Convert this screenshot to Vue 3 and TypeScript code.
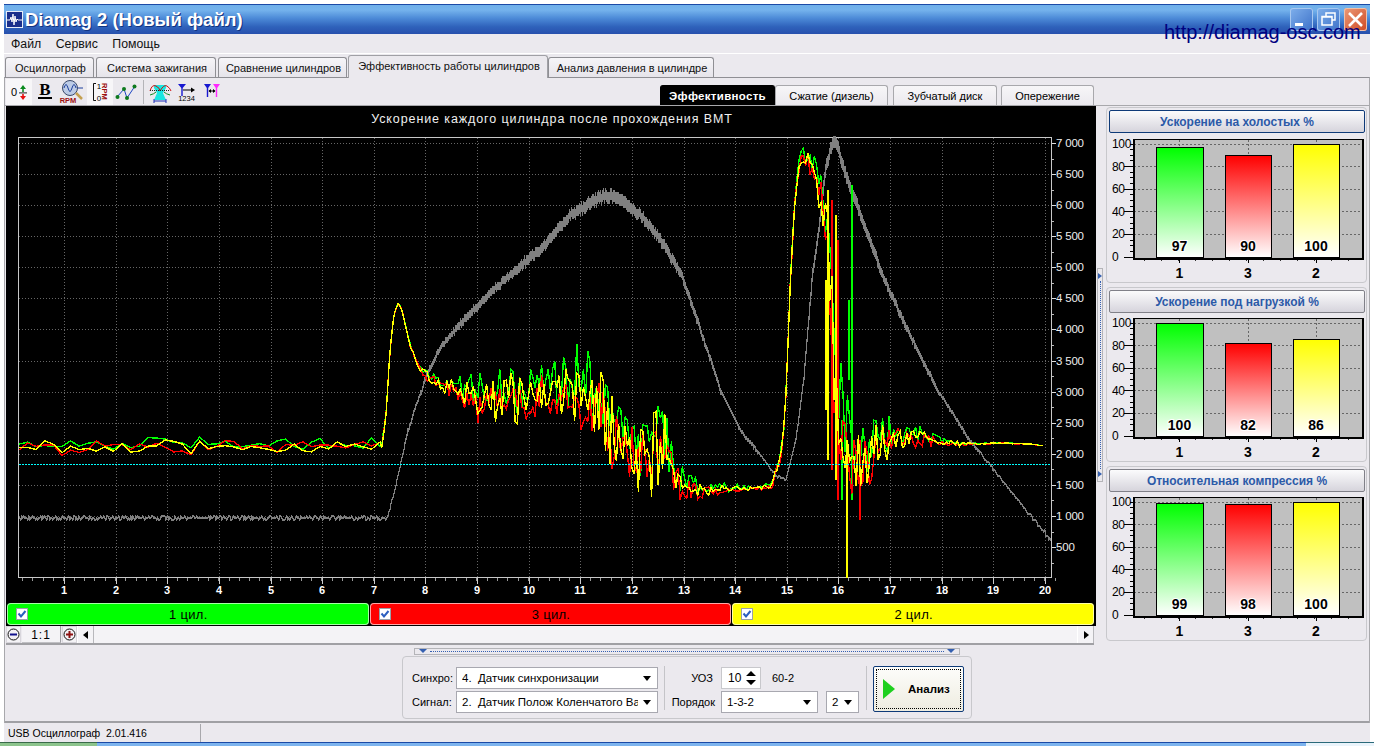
<script setup lang="ts">
type Key = [number, number, number];

const keys: Key[] = [
  [19, 447, 9], [379, 447, 9], [382, 445, 4], [386, 415, 1], [390, 350, 1], [394, 315, 1], [398, 303, 1], [402, 310, 1],
  [410, 345, 1.5], [418, 365, 3], [425, 375, 6], [440, 385, 9], [460, 392, 15], [480, 398, 25], [500, 400, 27], [520, 398, 29],
  [540, 393, 31], [560, 392, 33], [580, 392, 40], [600, 400, 44], [610, 430, 46], [630, 450, 50], [650, 455, 52], [665, 448, 48],
  [673, 470, 28], [685, 490, 17], [700, 490, 10], [720, 490, 6], [745, 488, 3], [772, 487, 3], [775, 470, 8], [780, 460, 8],
  [785, 420, 7], [790, 290, 4], [795, 200, 6], [800, 160, 11], [806, 158, 16], [815, 165, 22], [820, 190, 28], [828, 240, 38],
  [832, 330, 80], [835, 420, 70], [845, 448, 55], [860, 452, 44], [880, 445, 28], [890, 438, 22], [900, 435, 14], [920, 438, 11],
  [940, 441, 4.5], [960, 444, 3], [975, 444, 1.2], [1000, 443, 0.6], [1030, 444, 0.4], [1045, 446, 0.3],
];

const grayKeys: [number, number][] = [
  [19, 518], [385, 518], [388, 513], [394, 490], [400, 463], [406, 435], [413, 413], [427, 373], [443, 343], [470, 313],
  [493, 290], [520, 265], [540, 250], [570, 215], [600, 197], [615, 196], [640, 215], [660, 240], [680, 272], [700, 330],
  [720, 390], [740, 430], [760, 455], [775, 476], [785, 480], [795, 440], [803, 380], [807, 330], [812, 273], [818, 230],
  [825, 170], [832, 143], [836, 143], [847, 180], [857, 207], [870, 243], [887, 287], [907, 330], [937, 390], [967, 437],
  [993, 470], [1023, 507], [1050, 540],
];

function rng(seed: number): () => number {
  let s = seed >>> 0;
  return () => {
    s = (s + 0x6d2b79f5) >>> 0;
    let t = s;
    t = Math.imul(t ^ (t >>> 15), t | 1);
    t ^= t + Math.imul(t ^ (t >>> 7), t | 61);
    return ((t ^ (t >>> 14)) >>> 0) / 4294967296;
  };
}

function base(x: number): [number, number] {
  for (let i = 1; i < keys.length; i++) {
    if (x <= keys[i][0]) {
      const a = keys[i - 1];
      const b = keys[i];
      const f = (x - a[0]) / (b[0] - a[0]);
      return [a[1] + (b[1] - a[1]) * f, a[2] + (b[2] - a[2]) * f];
    }
  }
  const l = keys[keys.length - 1];
  return [l[1], l[2]];
}

function series(seed: number, bias: number, own: number): string {
  const r = rng(seed);
  const shared = rng(77);
  let d = "";
  let x = 19;
  while (x <= 1045) {
    const [y, amp] = base(x);
    const n = (shared() * 2 - 1) * 0.3 + (r() * 2 - 1) * own + bias;
    const py = Math.max(140, y + n * amp);
    d += `${d ? "L" : "M"}${x.toFixed(1)} ${py.toFixed(1)}`;
    x += x < 379 ? 8.6 : x < 415 ? 1.5 : 2.2;
  }
  return d;
}

function grayPath(): string {
  const r = rng(5);
  let d = "";
  let prev = 518;
  for (let x = 19; x <= 1050; x++) {
    let c = 518;
    for (let i = 1; i < grayKeys.length; i++) {
      if (x <= grayKeys[i][0]) {
        const a = grayKeys[i - 1];
        const b = grayKeys[i];
        c = a[1] + ((b[1] - a[1]) * (x - a[0])) / (b[0] - a[0]);
        break;
      }
    }
    const h = Math.min(6, Math.max(0.6, (540 - c) / 60));
    const n = (r() - 0.5) * (c > 510 ? 4 : 1 + h * 0.6);
    const y = Math.round((c + n) / 2) * 2;
    const top = Math.min(prev, y - h);
    const bot = Math.max(prev, y + h);
    d += `M${x + 0.5} ${top.toFixed(1)}V${bot.toFixed(1)}`;
    prev = y;
  }
  return d;
}

const green = series(11, -0.3, 0.72) + "M852 185V500M849 380V300M842 500V420";
const red = series(22, 0.2, 0.7) + "M832 200V470M838 240V500M860 520V440";
const yellow = series(33, 0, 0.7) + "M828 190V460M836 215V480M847 440V578M826 280V410";
const gray = grayPath();

const yTicks = ["7 000", "6 500", "6 000", "5 500", "5 000", "4 500", "4 000", "3 500", "3 000", "2 500", "2 000", "1 500", "1 000", "500"]
  .map((label, i) => ({ label, y: Math.round(143 + i * 31.08) }));
const xTicks = Array.from({ length: 20 }, (_, i) => ({ label: String(i + 1), x: Math.round(64 + i * 51.63) }));
const minorY = Array.from({ length: 28 }, (_, i) => Math.round(143 + i * 15.54));
const minorX = Array.from({ length: 101 }, (_, i) => Math.round(22 + i * 10.326));

const topTabs = [
  { t: "Осциллограф", w: 89 }, { t: "Система зажигания", w: 120 }, { t: "Сравнение цилиндров", w: 129 },
  { t: "Эффективность работы цилиндров", w: 200, active: true }, { t: "Анализ давления в цилиндре", w: 166 },
];
const subTabs = [
  { t: "Эффективность", w: 115, active: true, ml: 0 }, { t: "Сжатие (дизель)", w: 113, ml: 0 },
  { t: "Зубчатый диск", w: 104, ml: 5 }, { t: "Опережение", w: 93, ml: 4 },
];
const legend = [
  { t: "1 цил.", c: "green" }, { t: "3 цил.", c: "red" }, { t: "2 цил.", c: "yellow" },
];

const barX = [50, 119, 187];
const barW = [47, 46, 46];
const barLabels = ["1", "3", "2"];
const barColors = ["#00ff00", "#ff0000", "#ffff00"];
const yVals = [100, 80, 60, 40, 20, 0];
const panels = [
  { title: "Ускорение на холостых %", v: [97, 90, 100], focus: true },
  { title: "Ускорение под нагрузкой %", v: [100, 82, 86], focus: false },
  { title: "Относительная компрессия %", v: [99, 98, 100], focus: false },
];
const barMinorX = Array.from({ length: 13 }, (_, i) => 38 + i * 17);
const barMinorY = Array.from({ length: 21 }, (_, i) => 10 + i * 5.65);
function vy(p: number): number { return 123 - p * 1.13; }
</script>

<template>
  <div class="window">
    <header class="titlebar">
      <svg class="appicon" width="17" height="17" viewBox="0 0 17 17">
        <rect x="0.5" y="0.5" width="16" height="16" fill="#1a2f8c" stroke="#e8eef8" />
        <path d="M1 9H4L5 6L6 11L7 3L8 14L9 5L10 11L11 8L12 9H16" fill="none" stroke="#fff" stroke-width="1" />
      </svg>
      <span class="apptitle">Diamag 2 (Новый файл)</span>
      <div class="winbtns">
        <span class="wb blue"><svg width="23" height="23" viewBox="0 0 23 23"><rect x="5" y="15" width="8" height="3" fill="#fff" /></svg></span>
        <span class="wb blue"><svg width="23" height="23" viewBox="0 0 23 23"><path d="M9 8V5H18V12H15M5 8.5H15V17H5ZM5 9H15" fill="none" stroke="#fff" stroke-width="1.5" /></svg></span>
        <span class="wb closebtn"><svg width="23" height="23" viewBox="0 0 23 23"><path d="M5 5L18 18M18 5L5 18" stroke="#fff" stroke-width="2.6" /></svg></span>
      </div>
      <span class="url">http://diamag-osc.com</span>
    </header>

    <nav class="menubar"><span>Файл</span><span>Сервис</span><span>Помощь</span></nav>

    <div class="tabstrip">
      <div v-for="tab in topTabs" :key="tab.t" class="toptab" :class="{ active: tab.active }" :style="{ width: tab.w + 'px' }">{{ tab.t }}</div>
    </div>

    <div class="frame">
      <div class="toolrow">
        <div class="tools">
          <span class="tool pressed">
            <svg width="24" height="24" viewBox="0 0 24 24">
              <text x="4" y="16" class="ic0">0</text>
              <path d="M16 5L13 9H15.2V12H16.8V9H19Z" fill="#0a8a1e" />
              <rect x="12" y="12.4" width="8" height="1" fill="#222" />
              <path d="M16 20L13 16H15.2V14H16.8V16H19Z" fill="#e81010" />
            </svg>
          </span>
          <span class="tool">
            <svg width="24" height="24" viewBox="0 0 24 24">
              <text x="12" y="15" text-anchor="middle" class="icb">B</text>
              <rect x="5" y="17" width="14" height="2" fill="#000" />
            </svg>
          </span>
          <span class="tool">
            <svg width="26" height="26" viewBox="0 0 26 26">
              <circle cx="12" cy="9" r="7.5" fill="#bccbe6" stroke="#3a4a6a" />
              <path d="M6 9Q8 2 10 9T14 9T18 9M19.5 9H25" fill="none" stroke="#1c3f9c" />
              <path d="M18 14L24 20" stroke="#c4a050" stroke-width="2.5" />
              <text x="10" y="24" text-anchor="middle" class="icr">RPM</text>
            </svg>
          </span>
          <span class="gap3"></span>
          <span class="tool pressed">
            <svg width="24" height="24" viewBox="0 0 24 24">
              <path d="M8 3.5H5.5V20.5H8" fill="none" stroke="#111" />
              <text x="11" y="9" text-anchor="middle" class="ics">1</text>
              <text x="11" y="21" text-anchor="middle" class="ics">0</text>
              <text x="0" y="0" transform="translate(14 3) rotate(90)" class="icr2">RPM</text>
            </svg>
          </span>
          <span class="tool">
            <svg width="24" height="24" viewBox="0 0 24 24">
              <path d="M3 17L10 9L13 18L21 6" fill="none" stroke="#1c45c4" stroke-width="1" />
              <circle cx="3.5" cy="17" r="2" fill="#0d7a1e" /><circle cx="10" cy="9" r="2" fill="#0d7a1e" />
              <circle cx="13" cy="18" r="2" fill="#0d7a1e" /><circle cx="20.5" cy="6.5" r="2" fill="#0d7a1e" />
            </svg>
          </span>
          <span class="sep"></span>
          <span class="tool">
            <svg width="24" height="24" viewBox="0 0 24 24">
              <path d="M6 5H18V8L15 13L18 20H6L9 13L6 8Z" fill="#19e6e0" />
              <path d="M2 11Q4 4 8 6T12 11Q16 4 19 6T23 11" fill="none" stroke="#d01010" />
              <path d="M2 10.5H22" stroke="#222" stroke-dasharray="1 1" />
              <path d="M2 15Q6 14 8 12M16 12Q18 14 22 15" fill="none" stroke="#0f8a20" />
              <path d="M6 21H18M6 19V23M18 19V23" stroke="#1c2fb8" />
            </svg>
          </span>
          <span class="tool">
            <svg width="26" height="24" viewBox="0 0 26 24">
              <path d="M5 4H13L9.7 8V16H8.3V8Z" fill="#1818d0" />
              <path d="M10 10H20" stroke="#000" /><path d="M18 7.5L22 10L18 12.5Z" fill="#000" />
              <text x="13.5" y="21" text-anchor="middle" class="icn">1234</text>
            </svg>
          </span>
          <span class="tool">
            <svg width="26" height="24" viewBox="0 0 26 24">
              <path d="M5 4H12L9.2 8V17H7.8V8Z" fill="#1818d0" />
              <path d="M14 4H21L18.2 8V17H16.8V8Z" fill="#ff28ff" />
              <path d="M10 11H16" stroke="#000" /><path d="M12 9L9.5 11L12 13ZM14 9L16.5 11L14 13Z" fill="#000" />
            </svg>
          </span>
        </div>
        <div class="subtabs">
          <div v-for="s in subTabs" :key="s.t" class="subtab" :class="{ active: s.active }" :style="{ width: s.w + 'px', marginLeft: s.ml + 'px' }">{{ s.t }}</div>
        </div>
      </div>

      <div class="main">
        <div class="leftcol">
          <div class="scope">
            <svg class="chart" width="1090" height="497" viewBox="6 106 1090 497">
              <rect x="6" y="106" width="1090" height="497" fill="#000" />
              <text x="552" y="123" text-anchor="middle" class="ctitle">Ускорение каждого цилиндра после прохождения ВМТ</text>
              <g shape-rendering="crispEdges">
                <line v-for="t in yTicks" :key="'g' + t.y" x1="19" x2="1051" :y1="t.y" :y2="t.y" class="grid" />
                <line v-for="t in xTicks" :key="'v' + t.x" y1="138" y2="577" :x1="t.x" :x2="t.x" class="grid" />
                <path d="M18.5 137.5H1051.5V577.5H18.5Z" fill="none" stroke="#c8c8c8" />
                <line v-for="y in minorY" :key="'my' + y" x1="1052" x2="1054" :y1="y + 0.5" :y2="y + 0.5" stroke="#bbb" />
                <line v-for="t in yTicks" :key="'ty' + t.y" x1="1052" x2="1056" :y1="t.y + 0.5" :y2="t.y + 0.5" stroke="#ddd" />
                <line v-for="x in minorX" :key="'mx' + x" y1="578" y2="581" :x1="x + 0.5" :x2="x + 0.5" stroke="#999" />
                <line v-for="t in xTicks" :key="'tx' + t.x" y1="578" y2="584" :x1="t.x + 0.5" :x2="t.x + 0.5" stroke="#ccc" />
                <path :d="gray" fill="none" stroke="#808080" />
              </g>
              <g fill="none" shape-rendering="crispEdges" stroke-width="1.4">
                <path :d="green" stroke="#00ff00" />
                <path :d="red" stroke="#ff0000" />
                <path :d="yellow" stroke="#ffff00" />
              </g>
              <line x1="19" x2="1051" y1="464.5" y2="464.5" stroke="#00ffff" stroke-dasharray="2 1" shape-rendering="crispEdges" />
              <text v-for="t in yTicks" :key="'l' + t.y" x="1056" :y="t.y + 4" class="ylab">{{ t.label }}</text>
              <text v-for="t in xTicks" :key="'xl' + t.x" :x="t.x" y="594" text-anchor="middle" class="xlab">{{ t.label }}</text>
            </svg>
            <div class="legend">
              <div v-for="l in legend" :key="l.t" class="legitem" :class="l.c">
                <span class="check"><svg width="10" height="10" viewBox="0 0 10 10"><path d="M1.5 4.5L4 7.5L8.5 2" fill="none" stroke="#2c5fc0" stroke-width="2" /></svg></span>
                <span class="legtext">{{ l.t }}</span>
              </div>
            </div>
          </div>
          <div class="scrollrow">
            <span class="zoombtn"><svg width="13" height="13" viewBox="0 0 13 13"><circle cx="6.5" cy="6.5" r="5.5" fill="#f2f0f4" stroke="#111" /><rect x="3" y="5.5" width="7" height="2" fill="#10108c" /></svg></span>
            <span class="ratio">1:1</span>
            <span class="zoombtn"><svg width="13" height="13" viewBox="0 0 13 13"><circle cx="6.5" cy="6.5" r="5.5" fill="#f2f0f4" stroke="#111" /><path d="M3 6.5H10M6.5 3V10" stroke="#8c1010" stroke-width="2" /></svg></span>
            <span class="arrowbtn"><svg width="6" height="8" viewBox="0 0 6 8"><path d="M5 0V8L0 4Z" fill="#000" /></svg></span>
            <span class="track"></span>
            <span class="arrowbtn"><svg width="6" height="8" viewBox="0 0 6 8"><path d="M1 0V8L6 4Z" fill="#000" /></svg></span>
          </div>
        </div>

        <div class="gutter">
          <div class="vgrip">
            <svg width="5" height="6" viewBox="0 0 5 6"><path d="M0 0V6L4 3Z" fill="#3560b0" /></svg>
            <span class="vdots"></span>
            <svg width="5" height="6" viewBox="0 0 5 6"><path d="M0 0V6L4 3Z" fill="#3560b0" /></svg>
          </div>
        </div>

        <div class="rightcol">
          <section v-for="(p, pi) in panels" :key="p.title" class="panel" :class="{ first: pi === 0 }">
            <div class="ptitle" :class="{ focus: p.focus }">{{ p.title }}</div>
            <svg class="barsvg" width="259" height="147" viewBox="0 0 259 147">
              <defs>
                <linearGradient v-for="(c, i) in barColors" :id="`g${pi}${i}`" :key="c" x1="0" y1="0" x2="0" y2="1">
                  <stop offset="0" :stop-color="c" />
                  <stop offset="1" stop-color="#fff" />
                </linearGradient>
              </defs>
              <g transform="translate(-3 0)">
                <rect x="27.5" y="5.5" width="230" height="119" fill="#c0c0c0" />
                <g shape-rendering="crispEdges">
                  <line v-for="v in yVals.slice(0, 5)" :key="'h' + v" x1="28" x2="257" :y1="vy(v)" :y2="vy(v)" class="bgrid" />
                  <line v-for="(x, i) in barX" :key="'bv' + i" :x1="x + barW[i] / 2" :x2="x + barW[i] / 2" y1="6" y2="123" class="bgrid" />
                  <line v-for="y in barMinorY" :key="'bm' + y" x1="24" x2="27" :y1="y" :y2="y" stroke="#000" />
                  <line v-for="v in yVals.slice(1)" :key="'bt' + v" x1="18" x2="27" :y1="vy(v)" :y2="vy(v)" stroke="#000" />
                  <line v-for="x in barMinorX" :key="'bx' + x" :x1="x" :x2="x" y1="125" y2="127" stroke="#333" />
                  <line v-for="(x, i) in barX" :key="'bxt' + i" :x1="x + barW[i] / 2" :x2="x + barW[i] / 2" y1="125" y2="129" stroke="#000" />
                  <path d="M27.5 5.5H256.5V124H27.5Z" fill="none" stroke="#000" stroke-width="1" />
                  <path d="M27.5 5V124.5H257V5" fill="none" stroke="#000" stroke-width="2" />
                  <rect v-for="(x, i) in barX" :key="'b' + i" :x="x + 0.5" :y="vy(p.v[i]) + 0.5" :width="barW[i]" :height="123 - vy(p.v[i])" :fill="`url(#g${pi}${i})`" stroke="#000" />
                </g>
                <text v-for="v in yVals" :key="'yl' + v" x="6" :y="vy(v) + 4" class="bary">{{ v }}</text>
                <text v-for="(x, i) in barX" :key="'lv' + i" :x="x + barW[i] / 2" y="117" text-anchor="middle" class="barval">{{ p.v[i] }}</text>
                <text v-for="(x, i) in barX" :key="'lx' + i" :x="x + barW[i] / 2" y="144" text-anchor="middle" class="barx">{{ barLabels[i] }}</text>
              </g>
            </svg>
          </section>
        </div>
      </div>

      <div class="lower">
        <div class="hgrip">
          <svg width="8" height="5" viewBox="0 0 8 5"><path d="M0 0H8L4 4Z" fill="#3560b0" /></svg>
          <span class="hdots"></span>
          <svg width="8" height="5" viewBox="0 0 8 5"><path d="M0 0H8L4 4Z" fill="#3560b0" /></svg>
        </div>
        <div class="control">
          <div class="sigs">
            <label class="lab l1">Синхро:</label>
            <div class="sel s1"><span class="val">4.&nbsp; Датчик синхронизации</span><i class="drop"></i></div>
            <label class="lab l1">Сигнал:</label>
            <div class="sel s1"><span class="val">2.&nbsp; Датчик Полож Коленчатого Вала</span><i class="drop"></i></div>
          </div>
          <span class="vsep"></span>
          <div class="opts">
            <div class="optrow">
              <label class="lab l2 uoz">УОЗ</label>
              <div class="spin"><span>10</span>
                <svg width="12" height="16" viewBox="0 0 12 16"><path d="M6 1L11 6H1ZM6 15L1 10H11Z" fill="#000" /></svg>
              </div>
              <span class="lab t60">60-2</span>
            </div>
            <div class="optrow">
              <label class="lab l2">Порядок</label>
              <div class="sel s2"><span class="val">1-3-2</span><i class="drop"></i></div>
              <div class="sel s3"><span class="val">2</span><i class="drop"></i></div>
            </div>
          </div>
          <span class="vsep"></span>
          <button class="runbtn">
            <span class="runinner">
              <svg width="12" height="20" viewBox="0 0 12 20"><path d="M0 0L12 10L0 20Z" fill="#1ed01e" /></svg>
              <b>Анализ</b>
            </span>
          </button>
        </div>
      </div>
    </div>

    <footer class="status">
      <span class="st1">USB Осциллограф&nbsp; 2.01.416</span>
      <span class="st2"></span>
    </footer>
  </div>
  <div class="taskbar"><span class="start"></span><span class="tbmid"></span><span class="tray"></span></div>
</template>

<style>
html, body { margin: 0; padding: 0; background: #fff; overflow: hidden; }
</style>

<style scoped>
.window { width: 1366px; height: 738px; margin: 4px 4px 0; display: flex; flex-direction: column; font-family: "Liberation Sans", Arial, sans-serif; font-size: 11px; color: #000; background: #ebe9ee; position: relative; }
.titlebar { height: 30px; flex: none; box-sizing: border-box; display: flex; align-items: center; padding-left: 2px; border-top: 1px solid #1b4aa6; background: linear-gradient(#6fb0ea 0%, #74b2ec 18%, #4d8bd8 45%, #2f62bb 75%, #2750ad 100%); }
.appicon { flex: none; margin-right: 2px; }
.apptitle { font: bold 18.5px "Liberation Sans", Arial, sans-serif; color: #fff; text-shadow: 1px 1px 0 #12337f; white-space: nowrap; }
.winbtns { margin-left: auto; margin-right: 3px; display: flex; gap: 4px; }
.wb { width: 23px; height: 23px; border-radius: 3px; display: block; box-sizing: border-box; }
.wb svg { display: block; }
.wb.blue { background: linear-gradient(135deg, #7fb0ec, #3c70c8); box-shadow: inset 0 0 0 1px #a8c8f0; }
.closebtn { background: linear-gradient(135deg, #ec9a78, #cf4a24); box-shadow: inset 0 0 0 1px #f0c0a8; }
.url { position: absolute; left: 1160px; top: 17px; font: 20px "Liberation Sans", Arial, sans-serif; color: #000080; white-space: nowrap; }
.menubar { height: 19px; flex: none; display: flex; align-items: center; font-size: 12.3px; padding-left: 7px; gap: 14.5px; border-bottom: 1px solid #fff; box-sizing: content-box; color: #111; }
.tabstrip { height: 23px; flex: none; display: flex; align-items: flex-end; padding-left: 1px; gap: 0; }
.toptab { height: 20px; box-sizing: border-box; margin-right: 2px; border: 1px solid #8f8f94; border-bottom: none; border-radius: 3px 3px 0 0; background: linear-gradient(#f6f5f8, #e6e4ea); display: flex; align-items: center; justify-content: center; white-space: nowrap; font-size: 11px; color: #111; padding-left: 2px; }
.toptab.active { height: 23px; margin-bottom: -1px; margin-right: 0; background: #ebe9ee; border-color: #a0a0a5; position: relative; z-index: 1; padding-bottom: 2px; }
.toptab:nth-child(3) { margin-right: 1px; }
.frame { flex: 1; min-height: 0; display: flex; flex-direction: column; border-top: 1px solid #8f8f94; border-right: 1px solid #a8a8ac; border-left: 1px solid #a8a8ac; }
.toolrow { height: 27px; flex: none; display: flex; justify-content: space-between; border-bottom: 1px solid #a8a8ac; padding-left: 1px; box-sizing: content-box; }
.tools { display: flex; align-items: center; height: 27px; }
.tool { width: 26px; height: 26px; display: flex; align-items: center; justify-content: center; }
.tool svg { display: block; }
.tool.pressed { background: #f7f6f8; }
.gap3 { width: 3px; }
.sep { width: 1px; height: 24px; background: #b4b4b8; margin: 0 3px 0 4px; }
.ic0 { font: 11px "Liberation Sans", sans-serif; }
.icb { font: bold 17px "Liberation Serif", serif; }
.icr { font: bold 7.5px "Liberation Sans", sans-serif; fill: #9c1010; }
.icr2 { font: bold 7.5px "Liberation Sans", sans-serif; fill: #9c1010; }
.ics { font: 8px "Liberation Sans", sans-serif; }
.icn { font: 7.5px "Liberation Sans", sans-serif; }
.subtabs { display: flex; align-items: flex-end; margin-right: 275px; height: 27px; }
.subtab { height: 20px; box-sizing: border-box; border: 1px solid #a8a8ac; border-bottom: none; border-radius: 3px 3px 0 0; background: linear-gradient(#f7f6f8, #ebe9ee); display: flex; align-items: center; justify-content: center; font-size: 11px; white-space: nowrap; }
.subtab.active { background: #000; border-color: #000; color: #fff; font-weight: bold; letter-spacing: 0.3px; font-size: 11.5px; }
.main { height: 537px; flex: none; display: flex; padding-left: 1px; }
.leftcol { width: 1090px; flex: none; display: flex; flex-direction: column; }
.scope { background: #000; height: 520px; flex: none; }
.chart { display: block; }
.ctitle { font: 12.5px "Liberation Sans", sans-serif; fill: #f0f0f0; letter-spacing: 0.9px; }
.grid { stroke: #666; stroke-dasharray: 1 2; }
.ylab { font: 11.5px "Liberation Sans", sans-serif; fill: #eee; letter-spacing: -0.2px; }
.xlab { font: bold 11px "Liberation Sans", sans-serif; fill: #fff; }
.legend { display: flex; gap: 1px; height: 22px; padding: 0 2px 0 1px; }
.legitem { flex: 1; border-radius: 4px; box-shadow: inset 0 0 0 1px rgba(255, 255, 255, 0.65); display: flex; align-items: center; position: relative; padding-left: 9px; }
.legitem.green { background: #00ff00; }
.legitem.red { background: #ff0000; }
.legitem.yellow { background: #ffff00; }
.check { width: 12px; height: 12px; background: #fff; border: 1px solid #9aa0a8; box-sizing: border-box; display: flex; align-items: center; justify-content: center; }
.legtext { flex: 1; text-align: center; font-size: 13px; padding-right: 20px; letter-spacing: 0.3px; }
.scrollrow { height: 17px; flex: none; display: flex; align-items: stretch; border-bottom: 2px solid #a0a0a4; margin-right: 2px; }
.zoombtn { width: 15px; display: flex; align-items: center; justify-content: center; box-shadow: inset 0 0 0 1px #d8d6dc; background: #f4f3f6; }
.ratio { width: 39px; margin: 0 1px; text-align: center; font-size: 12px; letter-spacing: 1px; line-height: 18px; background: #f4f3f6; border-right: 1px solid #a0a0a4; border-bottom: 1px solid #c0c0c4; box-sizing: border-box; }
.arrowbtn { width: 17px; display: flex; align-items: center; justify-content: center; background: #f4f3f6; border-right: 1px solid #b8b8bc; border-left: 1px solid #fff; box-sizing: border-box; }
.track { flex: 1; background: #f4f3f6; }
.gutter { width: 10px; flex: none; display: flex; flex-direction: column; justify-content: center; height: 536px; }
.vgrip { width: 6px; height: 214px; margin-left: 1px; margin-top: 2px; box-sizing: border-box; border: 1px solid #b4b4b8; display: flex; flex-direction: column; align-items: center; justify-content: space-between; padding: 4px 0; }
.vdots { flex: 1; width: 0; margin: 2px 0; border-left: 1px dotted #3560b0; }
.rightcol { width: 261px; flex: none; display: flex; flex-direction: column; gap: 4px; padding-top: 1px; }
.panel { height: 175px; box-sizing: border-box; border: 1px solid #c8c8cc; border-radius: 4px; padding: 2px 1px 0 2px; display: flex; flex-direction: column; }
.panel.first { height: 176px; }
.ptitle { height: 23px; flex: none; box-sizing: border-box; border: 1px solid #808088; border-radius: 2px; background: linear-gradient(#fbfbfc, #d6d4dc); color: #2c5aa8; font-weight: bold; font-size: 12px; display: flex; align-items: center; justify-content: center; }
.ptitle.focus { border-color: #0e3a78; }
.barsvg { display: block; flex: none; margin-top: 0; }
.panel.first .barsvg { margin-top: 1px; }
.bgrid { stroke: #666; stroke-dasharray: 2 2; }
.bary { font: 12px "Liberation Sans", sans-serif; letter-spacing: -0.3px; }
.barval { font: bold 14px "Liberation Sans", sans-serif; paint-order: stroke; stroke: #fff; stroke-width: 2px; }
.barx { font: bold 14px "Liberation Sans", sans-serif; }
.lower { flex: 1; min-height: 0; display: flex; flex-direction: column; align-items: center; padding: 5px 0 0 0; border-bottom: 2px solid #a0a0a4; }
.hgrip { width: 546px; height: 7px; box-sizing: border-box; border: 1px solid #b4b4b8; display: flex; align-items: center; padding: 0 4px; gap: 3px; margin-bottom: 1px; flex: none; }
.hdots { flex: 1; height: 0; border-top: 1px dotted #3560b0; }
.control { width: 570px; height: 63px; flex: none; box-sizing: border-box; border: 1px solid #c8c8cc; border-radius: 4px; display: flex; align-items: center; padding: 0 6px 0 9px; }
.sigs { display: grid; grid-template-columns: 44px 202px; row-gap: 2px; align-items: center; margin-top: 5px; }
.lab { font-size: 11px; white-space: nowrap; }
.sel { height: 22px; box-sizing: border-box; background: #fff; border: 1px solid #a8a8b0; display: flex; align-items: center; padding: 0 6px 0 5px; font-size: 11.5px; overflow: hidden; }
.val { flex: 1; white-space: nowrap; overflow: hidden; min-width: 0; }
.drop { flex: none; width: 0; height: 0; border: 4px solid transparent; border-top: 5px solid #000; border-bottom: none; margin-left: 5px; }
.vsep { width: 1px; height: 44px; background: #c4c4c8; flex: none; margin: 0 6px; }
.opts { display: flex; flex-direction: column; gap: 2px; width: 189px; margin-top: 5px; }
.optrow { display: flex; align-items: center; height: 22px; }
.l2 { width: 44px; text-align: right; flex: none; margin-right: 6px; }
.l2.uoz { width: 42px; margin-right: 8px; }
.spin { width: 40px; height: 22px; box-sizing: border-box; background: #fff; border: 1px solid #c8c8cc; display: flex; align-items: center; justify-content: space-between; padding: 0 3px 0 6px; font-size: 12px; }
.t60 { margin-left: 11px; }
.s2 { width: 97px; flex: none; }
.s3 { width: 33px; margin-left: 8px; flex: none; }
.runbtn { width: 91px; height: 46px; flex: none; margin-top: 2px; padding: 2px; border: 1px solid #0e3a78; border-radius: 2px; background: linear-gradient(#fdfdfb, #eeece0); font: inherit; }
.runinner { display: flex; align-items: center; height: 100%; border: 1px dotted #000; box-sizing: border-box; padding-left: 6px; }
.runinner b { margin-left: 13px; font-size: 11.5px; }
.status { height: 19px; flex: none; display: flex; align-items: stretch; box-sizing: border-box; padding-top: 1px; }
.st1 { width: 189px; padding-left: 4px; font-size: 10.5px; line-height: 19px; white-space: nowrap; }
.st2 { flex: 1; border-left: 1px solid #a8a8ac; margin-left: 3px; }
.taskbar { height: 4px; display: flex; }
.start { width: 97px; background: #8cc48c; border-top: 1px solid #3a6a4a; box-sizing: border-box; }
.tbmid { width: 1209px; background: #7db4ee; border-top: 1px solid #1b4aa6; box-sizing: border-box; }
.tray { flex: 1; background: #eaf4fb; border-top: 1px solid #2a6a7a; box-sizing: border-box; }
</style>
